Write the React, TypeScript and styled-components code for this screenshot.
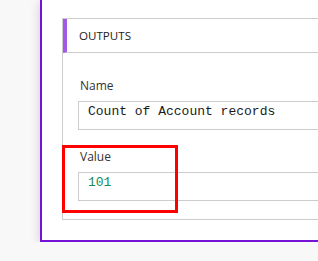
import React from 'react';
import styled, { createGlobalStyle } from 'styled-components';

const GlobalStyle = createGlobalStyle`
	html, body {
		margin: 0;
		padding: 0;
		background: #f8f8f8;
		overflow: hidden;
	}
	body {
		font-family: 'Open Sans', 'Noto Sans', sans-serif;
	}
`;

const StyledFrame = styled.div`
	box-sizing: border-box;
	margin-left: 40px;
	width: calc(100vw - 40px);
	overflow: hidden;
	background: #fff;
	border-left: 2px solid #7612d6;
	border-bottom: 2px solid #7612d6;
	padding: 18px 0 20px 20px;
	box-shadow: 0 2px 10px rgba(0, 0, 0, 0.18);
`;

const StyledCard = styled.section`
	position: relative;
	width: calc(100% + 40px);
	border: 1px solid #cccccc;
	background: #fff;
`;

const StyledCardHeader = styled.div`
	display: flex;
	align-items: center;
	height: 33px;
	border-left: 4px solid #a259e6;
	border-bottom: 1px solid #cccccc;
	padding-left: 12px;
	font-size: 11.6px;
	line-height: 16px;
	color: #222;
`;

const StyledCardBody = styled.div`
	display: flex;
	flex-direction: column;
	gap: 19px;
	padding: 25px 0 18px 15px;
`;

const StyledField = styled.div`
	display: flex;
	flex-direction: column;

	label {
		font-size: 12px;
		line-height: 16px;
		color: #333;
		margin: 0 0 7px 2px;
	}
`;

const StyledValueBox = styled.div<{ $tone?: string }>`
	box-sizing: border-box;
	height: 29px;
	border: 1px solid #cccccc;
	padding: 2px 0 0 9px;
	font-family: 'Liberation Mono', 'DejaVu Sans Mono', monospace;
	font-size: 13px;
	line-height: 16px;
	color: ${(p) => p.$tone || '#1a1a1a'};
	white-space: pre;
`;

const StyledHighlight = styled.div`
	position: absolute;
	left: -1px;
	top: 126px;
	width: 116px;
	height: 68px;
	box-sizing: border-box;
	border: 3px solid #ff0000;
	pointer-events: none;
`;

type OutputFieldProps = {
	rotulo: string;
	valor: string;
	cor?: string;
};

const OutputField = ({ rotulo, valor, cor }: OutputFieldProps) => (
	<StyledField>
		<label>{rotulo}</label>
		<StyledValueBox $tone={cor}>{valor}</StyledValueBox>
	</StyledField>
);

const App = () => {
	return (
		<>
			<GlobalStyle />
			<StyledFrame>
				<StyledCard>
					<StyledCardHeader>OUTPUTS</StyledCardHeader>
					<StyledCardBody>
						<OutputField rotulo='Name' valor='Count of Account records' />
						<OutputField rotulo='Value' valor='101' cor='#118a5c' />
					</StyledCardBody>
					<StyledHighlight />
				</StyledCard>
			</StyledFrame>
		</>
	);
};

export default App;
